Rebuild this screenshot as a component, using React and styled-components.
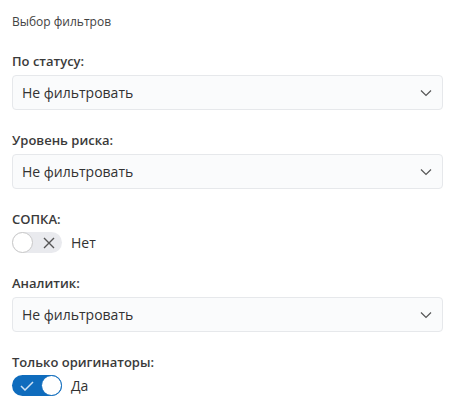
import React from 'react';
import styled, { createGlobalStyle } from 'styled-components';

const GlobalStyle = createGlobalStyle`
    html, body {
        margin: 0;
        padding: 0;
        background: #ffffff;
        font-family: "Open Sans", "Noto Sans", sans-serif;
        color: #242424;
    }
`;

const Panel = styled.div`
    width: 456px;
    padding: 14px 13px 0 12px;
    box-sizing: border-box;
    display: flex;
    flex-direction: column;
`;

const Title = styled.div`
    font-size: 12px;
    line-height: 16px;
    color: #424242;
    margin-bottom: 22px;
`;

const Group = styled.div`
    display: flex;
    flex-direction: column;
    gap: ${p => (p.$toggle ? '4px' : '5px')};
    margin-bottom: ${p => (p.$toggle ? '21px' : '21px')};
`;

const Label = styled.div`
    font-size: 13px;
    line-height: 18px;
    font-weight: 600;
    color: #3a3a3a;
`;

const Select = styled.div`
    height: 35px;
    box-sizing: border-box;
    border: 1px solid #e6e8eb;
    border-radius: 4px;
    background: #fafbfc;
    display: flex;
    align-items: center;
    justify-content: space-between;
    padding: 0 10px 0 9px;
    font-size: 14px;
    color: #323232;
`;

const ToggleRow = styled.div`
    display: flex;
    align-items: center;
    gap: 9px;
    font-size: 14px;
    color: #323232;
`;

const Track = styled.div`
    width: 50px;
    height: 21px;
    border-radius: 11px;
    background: ${p => (p.$on ? '#0f6cbd' : '#e9eaee')};
    display: flex;
    flex-direction: ${p => (p.$on ? 'row-reverse' : 'row')};
    align-items: center;
    justify-content: space-between;
    padding: 0 ${p => (p.$on ? '0' : '7px')} 0 ${p => (p.$on ? '8px' : '0')};
    box-sizing: border-box;
`;

const Knob = styled.div`
    width: 21px;
    height: 21px;
    border-radius: 50%;
    background: #ffffff;
    box-sizing: border-box;
    border: 1px solid ${p => (p.$on ? '#0f6cbd' : '#c8c8c8')};
`;

const Chevron = () => (
    <svg width="12" height="8" viewBox="0 0 12 8" fill="none">
        <path d="M1 1.5 L6 6.5 L11 1.5" stroke="#555" strokeWidth="1.2" />
    </svg>
);

const Cross = () => (
    <svg width="12" height="12" viewBox="0 0 12 12" fill="none">
        <path d="M1 1 L11 11 M11 1 L1 11" stroke="#555" strokeWidth="1.4" />
    </svg>
);

const Check = () => (
    <svg width="14" height="10" viewBox="0 0 14 10" fill="none">
        <path d="M1 5 L5 9 L13 1" stroke="#cfe3f5" strokeWidth="1.5" />
    </svg>
);

function Toggle({ on, text }) {
    return (
        <ToggleRow>
            <Track $on={on}>
                <Knob $on={on} />
                {on ? <Check /> : <Cross />}
            </Track>
            {text}
        </ToggleRow>
    );
}

export default function App() {
    return (
        <Panel>
            <GlobalStyle />
            <Title>Выбор фильтров</Title>
            <Group>
                <Label>По статусу:</Label>
                <Select>Не фильтровать <Chevron /></Select>
            </Group>
            <Group>
                <Label>Уровень риска:</Label>
                <Select>Не фильтровать <Chevron /></Select>
            </Group>
            <Group $toggle>
                <Label>СОПКА:</Label>
                <Toggle on={false} text="Нет" />
            </Group>
            <Group>
                <Label>Аналитик:</Label>
                <Select>Не фильтровать <Chevron /></Select>
            </Group>
            <Group $toggle>
                <Label>Только оригинаторы:</Label>
                <Toggle on text="Да" />
            </Group>
        </Panel>
    );
}
